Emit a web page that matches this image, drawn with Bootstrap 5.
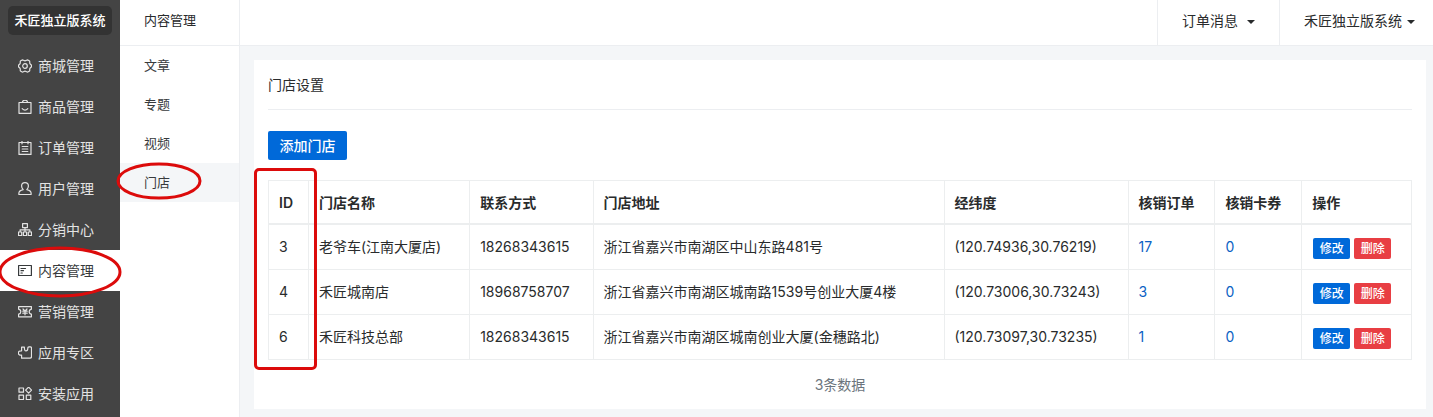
<!DOCTYPE html>
<html lang="zh-CN">
<head>
<meta charset="utf-8">
<meta name="viewport" content="width=device-width, initial-scale=1">
<title>门店设置</title>
<link href="https://cdn.jsdelivr.net/npm/bootstrap@5.3.0/dist/css/bootstrap.min.css" rel="stylesheet">
<style>
  body { font-family: Inter, "Noto Sans CJK SC", sans-serif; font-size: 14px; line-height: 20px; color: #292b2c; background: #f4f6f8; }
  a { text-decoration: none; }
  .side-main { width: 120px; background: #444; }
  .side-sub { width: 120px; border-right: 1px solid #eceef1; font-size: 13px; }
  .brand-box { margin: 6px 8px 10px; padding-bottom: 2px; height: 29px; border-radius: 5px; background: #333; color: #fff; font-size: 13px; font-weight: 500; }
  .side-main .nav-link { height: 41px; padding: 0 0 0 18px; gap: 6px; color: #e3e3e3; }
  .side-main .nav-link.active { background: #fff; color: #373a3c; }
  .side-main svg.ico { width: 14px; height: 14px; flex: none; fill: none; stroke: currentColor; stroke-width: 1.2; stroke-linejoin: round; stroke-linecap: round; }
  .side-sub .nav-link { height: 39px; padding: 0 24px 2px; color: #373a3c; }
  .side-sub .nav-link.active { background: #f4f6f8; }
  .bar { height: 46px; border-bottom: 1px solid #eceef1; padding-bottom: 5px; }
  .topbar { height: 46px; border-bottom: 1px solid #eceef1; }
  .top-menu { border: 0; border-left: 1px solid #eceef1; background: none; color: #292b2c; padding: 0 24px 3px; }
  .top-menu.last { padding-right: 18px; }
  .top-menu::after { margin-left: 9px; vertical-align: 2px; }
  .top-menu.last::after { margin-left: 5px; }
  .page { padding: 14px 7px 8px 14px; }
  .panel { padding: 15px 14px 14px; }
  .panel-title { padding-bottom: 14px; margin-bottom: 21px; border-bottom: 1px solid #eceef1; font-size: 14px; line-height: 20px; font-weight: 400; }
  .btn { --bs-btn-border-width: 0; font-weight: 500; border-radius: 2px; }
  .btn-primary { --bs-btn-bg: #0069d9; }
  .btn-danger { --bs-btn-bg: #e83e43; }
  .btn-add { --bs-btn-font-size: 14px; height: 29px; padding: 0 11px; line-height: 29px; min-width: 79px; }
  .btn-row { --bs-btn-font-size: 12px; height: 21px; padding: 0 6px; line-height: 21px; min-width: 37px; }
  .stores { table-layout: fixed; min-width: 1100px; border-color: #eceeef; --bs-table-color: #292b2c; }
  .stores th, .stores td { padding: 12px 10px 11px; line-height: 20px; white-space: nowrap; }
  .stores th { font-weight: 600; padding-bottom: 10px; }
  .stores thead tr { border-bottom: 2px solid #eceeef; }
  .stores td { height: 45px; vertical-align: top; }
  .stores td.ops { padding: 13px 0 9px 11px; }
  .stores a { color: #0b62c4; }
  .total { margin-top: 15px; }
  .ring { position: absolute; z-index: 5; overflow: visible; pointer-events: none; fill: none; stroke: #dc0b0b; stroke-width: 3; }
  .ring-main { left: -1px; top: -3px; width: 122px; height: 50px; }
  .ring-sub { left: -3px; top: 0; width: 84px; height: 37px; }
  .ring-id { position: absolute; left: -14px; top: -12px; bottom: -10px; width: 63px; border: 3px solid #dc0b0b; border-radius: 5px; pointer-events: none; }
</style>
</head>
<body>
<div class="d-flex min-vh-100">
  <nav class="side-main flex-shrink-0" aria-label="主菜单">
    <div class="brand-box d-flex align-items-center justify-content-center">禾匠独立版系统</div>
    <div class="nav flex-column flex-nowrap">
      <a href="#" class="nav-link d-flex align-items-center"><svg class="ico" viewBox="0 0 14 14"><path d="M4.2.9C5 .7 5.8 1.8 7 1.8S9 .7 9.8.9L11.6 2C12 2.7 11.4 3.9 12 4.8L13.5 6.2V7.8L12 9.2C11.4 10.1 12 11.3 11.6 12L9.8 13.1C9 13.3 8.2 12.2 7 12.2S5 13.3 4.2 13.1L2.4 12C2 11.3 2.6 10.1 2 9.2L.5 7.8V6.2L2 4.8C2.6 3.9 2 2.7 2.4 2Z"/><circle cx="7" cy="7" r="2.3"/></svg>商城管理</a>
      <a href="#" class="nav-link d-flex align-items-center"><svg class="ico" viewBox="0 0 14 14"><path d="M1 2.5H13V13.3H1ZM4.3 2.3Q4.8.2 7 .2T9.7 2.3M4.2 8.6Q7 11.6 9.8 8.6"/></svg>商品管理</a>
      <a href="#" class="nav-link d-flex align-items-center"><svg class="ico" viewBox="0 0 14 14"><path d="M1 1.5H13V13.4H1ZM4 .2V2.8M10 .2V2.8M4.2 5.5H9.8M4.2 8H9.8M4.2 10.5H9.8"/></svg>订单管理</a>
      <a href="#" class="nav-link d-flex align-items-center"><svg class="ico" viewBox="0 0 14 14"><path d="M5.2 7.6C4.2 6.6 3.6 5.3 3.6 4A3.4 3.4 0 0 1 10.4 4C10.4 5.3 9.8 6.6 8.8 7.6C11.7 8.3 13.1 9.2 13.1 11V12.5H.9V11C.9 9.2 2.3 8.3 5.2 7.6Z"/></svg>用户管理</a>
      <a href="#" class="nav-link d-flex align-items-center"><svg class="ico" viewBox="0 0 14 14"><path d="M4.6.7H9.4V4.6H4.6ZM.5 9H3.7V12.5H.5ZM5.4 9H8.6V12.5H5.4ZM10.3 9H13.5V12.5H10.3ZM7 4.6V9M2.1 9V6.8H11.9V9"/></svg>分销中心</a>
      <a href="#" class="nav-link active d-flex align-items-center position-relative" aria-current="true"><svg class="ico" viewBox="0 0 14 14"><path d="M.6 1.5H13.4V11.5H.6ZM3 4.5H7.5M3 6.7H5.5M3 9H4.3"/></svg>内容管理<svg class="ring ring-main" viewBox="0 0 122 50" aria-hidden="true"><ellipse cx="61" cy="25" rx="60" ry="24"/></svg></a>
      <a href="#" class="nav-link d-flex align-items-center"><svg class="ico" viewBox="0 0 14 14"><path d="M.6 1.6H13.4V4.2Q11.2 4.6 11.2 6.7T13.4 9.2V11.8H.6V9.2Q2.8 8.8 2.8 6.7T.6 4.2ZM5 4 7 6 9 4M4.8 6.2H9.2M4.8 8.2H9.2M7 6V9.8"/></svg>营销管理</a>
      <a href="#" class="nav-link d-flex align-items-center"><svg class="ico" viewBox="0 0 14 14"><path d="M3.6 4.8V1.2H6.4Q6.2 4.8 8 4.8T9.8 2.4Q9.8.8 11 .8H12.4Q13.5.8 13.5 2V10.6Q13.5 12.2 12 12.2H3.6V9.2Q.4 9.4.4 7T3.6 4.8Z"/></svg>应用专区</a>
      <a href="#" class="nav-link d-flex align-items-center"><svg class="ico" viewBox="0 0 14 14"><path d="M1 1H5.5V5.2H1ZM1 8.2H5.5V12.5H1ZM8.3 8.2H12.8V12.5H8.3ZM10.6.1 13.6 3.1 10.6 6.1 7.6 3.1Z"/></svg>安装应用</a>
    </div>
  </nav>

  <nav class="side-sub flex-shrink-0 bg-white" aria-label="内容管理">
    <div class="bar px-4 d-flex align-items-center">内容管理</div>
    <div class="nav flex-column">
      <a href="#" class="nav-link d-flex align-items-center">文章</a>
      <a href="#" class="nav-link d-flex align-items-center">专题</a>
      <a href="#" class="nav-link d-flex align-items-center">视频</a>
      <a href="#" class="nav-link active d-flex align-items-center position-relative" aria-current="page">门店<svg class="ring ring-sub" viewBox="0 0 84 37" aria-hidden="true"><ellipse cx="42" cy="18" rx="41" ry="17"/></svg></a>
    </div>
  </nav>

  <div class="flex-grow-1 overflow-hidden">
    <header class="topbar bg-white d-flex justify-content-end align-items-stretch">
      <button type="button" class="top-menu dropdown-toggle" data-bs-toggle="dropdown">订单消息</button>
      <button type="button" class="top-menu last dropdown-toggle" data-bs-toggle="dropdown">禾匠独立版系统</button>
    </header>
    <main class="page">
      <section class="panel bg-white">
        <h1 class="panel-title">门店设置</h1>
        <button type="button" class="btn btn-primary btn-add d-block">添加门店</button>
        <div class="mt-3 pt-1">
          <div class="position-relative">
          <table class="table table-bordered stores mb-0">
            <colgroup>
              <col style="width:3.5%"><col style="width:14.1%"><col style="width:10.8%"><col style="width:30.7%"><col style="width:16.1%"><col style="width:7.6%"><col style="width:7.6%"><col style="width:9.6%">
            </colgroup>
            <thead>
              <tr><th>ID</th><th>门店名称</th><th>联系方式</th><th>门店地址</th><th>经纬度</th><th>核销订单</th><th>核销卡券</th><th>操作</th></tr>
            </thead>
            <tbody>
              <tr><td>3</td><td>老爷车(江南大厦店)</td><td>18268343615</td><td>浙江省嘉兴市南湖区中山东路481号</td><td>(120.74936,30.76219)</td><td><a href="#">17</a></td><td><a href="#">0</a></td>
                <td class="ops"><div class="d-flex gap-1"><button type="button" class="btn btn-primary btn-row">修改</button><button type="button" class="btn btn-danger btn-row">删除</button></div></td></tr>
              <tr><td>4</td><td>禾匠城南店</td><td>18968758707</td><td>浙江省嘉兴市南湖区城南路1539号创业大厦4楼</td><td>(120.73006,30.73243)</td><td><a href="#">3</a></td><td><a href="#">0</a></td>
                <td class="ops"><div class="d-flex gap-1"><button type="button" class="btn btn-primary btn-row">修改</button><button type="button" class="btn btn-danger btn-row">删除</button></div></td></tr>
              <tr><td>6</td><td>禾匠科技总部</td><td>18268343615</td><td>浙江省嘉兴市南湖区城南创业大厦(金穗路北)</td><td>(120.73097,30.73235)</td><td><a href="#">1</a></td><td><a href="#">0</a></td>
                <td class="ops"><div class="d-flex gap-1"><button type="button" class="btn btn-primary btn-row">修改</button><button type="button" class="btn btn-danger btn-row">删除</button></div></td></tr>
            </tbody>
          </table>
          <div class="ring-id" aria-hidden="true"></div>
          </div>
        </div>
        <p class="total text-center text-secondary mb-0">3条数据</p>
      </section>
    </main>
  </div>
</div>
<script src="https://cdn.jsdelivr.net/npm/bootstrap@5.3.0/dist/js/bootstrap.bundle.min.js"></script>
</body>
</html>
